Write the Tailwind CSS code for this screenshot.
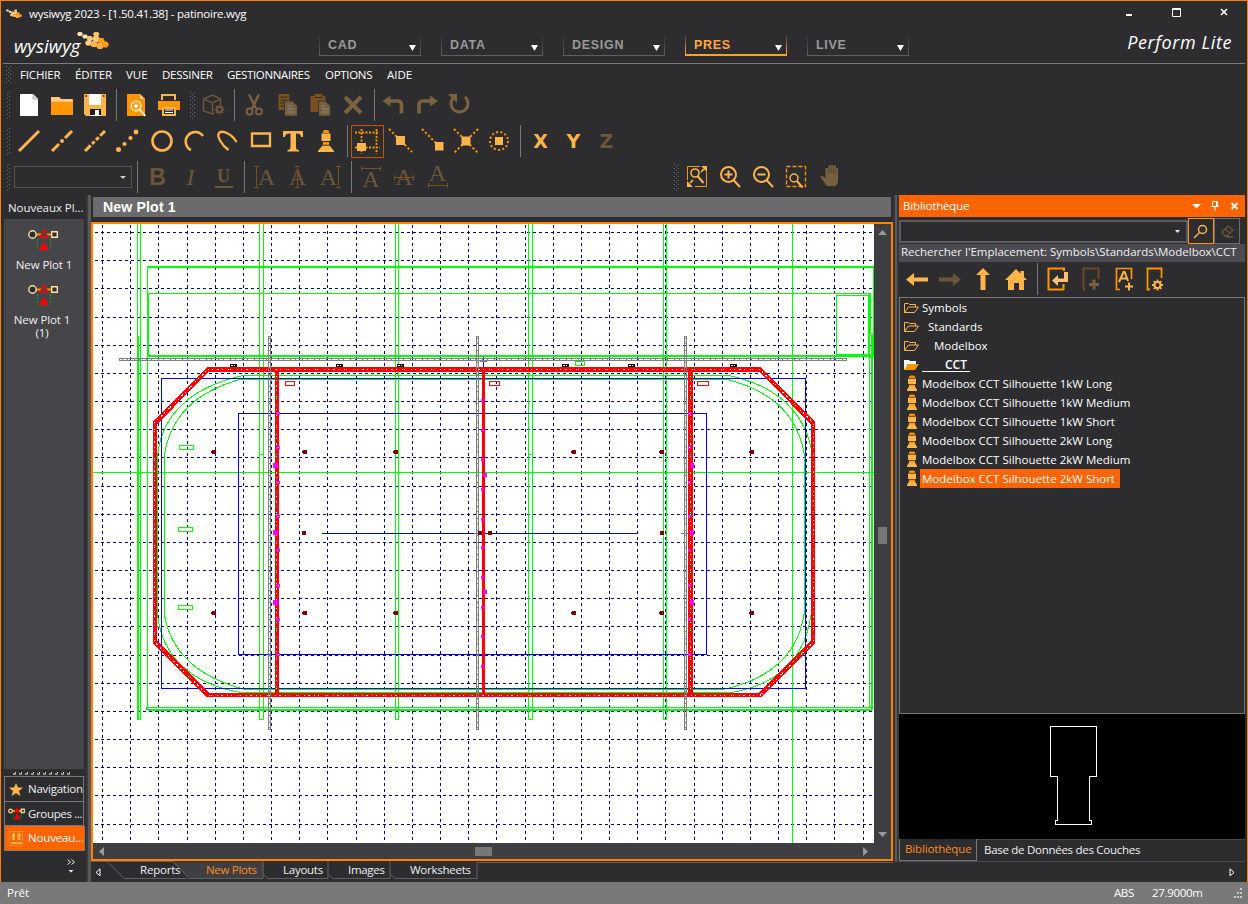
<!DOCTYPE html>
<html lang="fr">
<head>
<meta charset="utf-8">
<title>wysiwyg 2023 - patinoire.wyg</title>
<script src="https://cdn.jsdelivr.net/npm/@tailwindcss/browser@4"></script>
</head>
<body class="w-[1248px] h-[904px] overflow-hidden bg-[#2d2d30] text-[#f0f0f0] font-['Open_Sans','Noto_Sans',sans-serif] text-[11.5px] leading-[16px] whitespace-nowrap cursor-default">
<svg width="0" height="0" class="absolute">
  <defs>
    <pattern id="grip" width="4" height="4" patternUnits="userSpaceOnUse"><rect width="1" height="1" fill="#6e6e72"/><rect x="2" y="2" width="1" height="1" fill="#6e6e72"/></pattern>
    <pattern id="hgrip" width="4" height="4" patternUnits="userSpaceOnUse"><rect width="1" height="1" fill="#ff8a2a"/><rect x="2" y="2" width="1" height="1" fill="#ff8a2a"/></pattern>
    <symbol id="lamp" viewBox="0 0 24 24"><path d="M9 2.500c0-2 6-2 6 0V4H9z M9 13h6v3H9z" fill="#ff9500"/><path d="M7.500 4.500h9V12h-9z M8.500 16.500h7L20 22v1H4v-1z" fill="#ffb44c"/><path d="M9 12.500h6M9 16.200h6" stroke="#3a2a10" stroke-width=".7"/></symbol>
    <symbol id="lamp2" viewBox="0 0 12 17"><path d="M3 1.500C3 0 9 0 9 1.500V3H3z M3 9.500h6V12H3z" fill="#ff9500"/><path d="M2 3.500h8V9H2z M3 11.500h6l2 3.500v1H1v-1z" fill="#ffb44c"/><path d="M3 3.300h6M3 9.500h6" stroke="#7a4a00" stroke-width=".8"/></symbol>
    <symbol id="fold" viewBox="0 0 16 12"><path d="M.5 10.500v-9h4l1 1h6v2.500M.5 10.500l4-5.500h10l-4 5.500z" fill="none" stroke="#ffb44c"/></symbol>
    <symbol id="plot" viewBox="0 0 30 24"><path d="M8 6.500h16" stroke="#ff9500" stroke-width="2"/><circle cx="4.500" cy="6.500" r="3.700" fill="#2d2d30" stroke="#ffe0a8" stroke-width="1.400"/><path d="M23.700 3.700h5.600v5.600h-5.600z" fill="#2d2d30" stroke="#ffe0a8" stroke-width="1.400"/><path d="M12 9l4-7 4 7z" fill="#46454a" stroke="#f00" stroke-width="1.400"/><path d="M11 22l5-8 5 8z" fill="#f00"/><path d="M9.500 11v11M22.500 11v11" stroke="#0a0" stroke-dasharray="2 1.500"/></symbol>
    <symbol id="miniplot" viewBox="0 0 17 14"><path d="M4 4h9" stroke="#ff9500" stroke-width="2"/><circle cx="2.500" cy="4" r="1.800" fill="none" stroke="#ffd9a0" stroke-width="1.200"/><path d="M13.300 2.200h3v3.500h-3z" fill="none" stroke="#ffd9a0" stroke-width="1.200"/><path d="M6 5.500l3-5 3 5z M6 12.500l3-7 3 7z" fill="#e00"/><path d="M5 6v6M13 6v6" stroke="#0a0" stroke-dasharray="1.500 1"/></symbol>
    <symbol id="splash" viewBox="0 0 32 18"><path d="M0 2l1.500-2h3L6 2 4.500 4h-3z M5 4.500l1.500-2h3l1.500 2-1.500 2h-3z" fill="#ffe2b5"/><path d="M16 2l1.500-2h3.500l1.500 2-1.500 3h-3.500z" fill="#ffbf66"/><path d="M9.500 6.500L11 4h3.500l1.500 2.500L14.500 9H11z M15 6.500L17 4h4l2 2.500L21 10h-4z" fill="#ffc873"/><path d="M20.500 9l1.700-3h4l1.600 3-1.600 3h-4z" fill="#ff9f1f"/><path d="M8 11l1.500-2.500h4L15 11l-1.500 2.500h-4z" fill="#ffd28c"/><path d="M13 12l2-3h4l2 3-2 3h-4z" fill="#ffb347"/><path d="M19 14l2-3h4l2 3-2 3h-4z" fill="#ffae3d"/><path d="M25 12.500l1.500-3h3.500l2 3-2 3h-3.500z" fill="#ff9a1a"/></symbol>
  </defs>
</svg>
<div class="flex flex-col h-[882px] border-x border-t border-[#ff8200] w-[1248px]">
  <!-- title bar -->
  <div class="flex items-center h-[26px] shrink-0 pl-[5px] pr-[18px]">
    <svg width="16" height="10"><use href="#splash"/></svg>
    <span class="ml-[7px] text-white tracking-[-0.24px]">wysiwyg 2023 - [1.50.41.38] - patinoire.wyg</span>
    <svg class="ml-auto mb-[6px]" width="104" height="12" fill="none" stroke="#fff"><path d="M1 10h6" stroke-width="2"/><path d="M47.500 3.500h8v8h-8zM47 4.500h9"/><path d="M96 4l6 6m0-6l-6 6" stroke-width="1.600"/></svg>
  </div>
  <!-- logo and mode selector -->
  <div class="flex h-[36px] shrink-0 mx-[2px]">
    <div class="w-[316px] flex items-start pl-[11px]">
      <span class="mt-[8px] w-[67px] text-[18.500px] italic text-white tracking-[.1px] leading-[22px]">wysiwyg</span>
      <svg class="-ml-[4px] mt-[5px]" width="32" height="18"><use href="#splash"/></svg>
    </div>
    <div class="flex gap-[20px] pt-[8px] font-['Liberation_Sans',sans-serif] font-bold text-[12.5px] tracking-[.7px] text-[#9a9a9a]">
      <div class="w-[102px] h-[21px] border-x border-b [border-image:linear-gradient(transparent,#606062)_1] flex items-center justify-between pl-[8px] pr-[4px]"><span>CAD</span><svg class="mt-[5px]" width="7" height="6"><path d="M0 0h7L3.500 6z" fill="#fff"/></svg></div>
      <div class="w-[102px] h-[21px] border-x border-b [border-image:linear-gradient(transparent,#606062)_1] flex items-center justify-between pl-[8px] pr-[4px]"><span>DATA</span><svg class="mt-[5px]" width="7" height="6"><path d="M0 0h7L3.500 6z" fill="#fff"/></svg></div>
      <div class="w-[102px] h-[21px] border-x border-b [border-image:linear-gradient(transparent,#606062)_1] flex items-center justify-between pl-[8px] pr-[4px]"><span>DESIGN</span><svg class="mt-[5px]" width="7" height="6"><path d="M0 0h7L3.500 6z" fill="#fff"/></svg></div>
      <div class="w-[102px] h-[21px] border-x border-b-2 [border-image:linear-gradient(transparent,#ffa02d_80%)_2_1] flex items-center justify-between pl-[8px] pr-[4px] text-[#ffa63c]"><span>PRES</span><svg class="mt-[6px]" width="7" height="6"><path d="M0 0h7L3.500 6z" fill="#fff"/></svg></div>
      <div class="w-[102px] h-[21px] border-x border-b [border-image:linear-gradient(transparent,#606062)_1] flex items-center justify-between pl-[8px] pr-[4px]"><span>LIVE</span><svg class="mt-[5px]" width="7" height="6"><path d="M0 0h7L3.500 6z" fill="#fff"/></svg></div>
    </div>
    <span class="ml-auto mr-[13px] mt-[3px] text-[18px] tracking-[.6px] leading-[24px] italic text-white">Perform Lite</span>
  </div>
  <div class="h-px shrink-0 mx-[2px] bg-[#7b7b7d]"></div>
  <!-- menu -->
  <div class="flex items-center h-[23px] shrink-0 pl-[5px] pb-[2px] text-white tracking-[-0.05px]">
    <svg width="5" height="18"><rect width="5" height="18" fill="url(#grip)"/></svg>
    <span class="ml-[9px] w-[55px] tracking-[-0.15px]">FICHIER</span><span class="w-[51px] tracking-[-0.15px]">ÉDITER</span><span class="w-[36px]">VUE</span><span class="w-[65px] tracking-[-0.25px]">DESSINER</span><span class="w-[98px] tracking-[-0.35px]">GESTIONNAIRES</span><span class="w-[62px] tracking-[-0.3px]">OPTIONS</span><span>AIDE</span>
  </div>
  <!-- toolbar: file and edit -->
  <div class="flex items-center h-[36px] shrink-0 [&>svg]:shrink-0">
    <svg width="12" height="34"><rect x="5" y="3" width="5" height="29" fill="url(#grip)"/></svg>
    <svg width="33" height="24" viewBox="-4 0 33 24"><path d="M3 1h13l5 5v17H3z" fill="#fff"/><path d="M16 1v5h5" fill="#ddd" stroke="#999" stroke-width=".7"/></svg>
    <svg width="33" height="24" viewBox="-4 0 33 24"><path d="M1 4h8l2 2h12v16H1z" fill="#ff9500"/><path d="M1 4h8l2 2h11v1.500H1z" fill="#ffc878"/><path d="M1 8h22" stroke="#fff" stroke-width=".8"/></svg>
    <svg width="33" height="24" viewBox="-4 0 33 24"><path d="M1 1h22v22H3l-2-2z" fill="#ffb44c"/><path d="M6 1h12v11H6z" fill="#fff"/><path d="M7 16h11v7H7z" fill="#1d1d1f"/><path d="M12 17h4v6h-4z M7 22h11v1H7z" fill="#fff"/><path d="M20 2h1.500v2H20z M2.500 2H4v2H2.500z" fill="#5a3500"/></svg>
    <svg width="8" height="34"><path d="M4.500 1v32" stroke="#77777a"/></svg>
    <svg width="33" height="24" viewBox="-4 0 33 24"><path d="M3 1h13l5 5v17H3z" fill="#ff9500"/><path d="M16 1v5h5" fill="#ffc878"/><circle cx="12" cy="13" r="4.800" fill="none" stroke="#ffe9cc" stroke-width="1.500"/><path d="M15.500 16.500l6 6.500M9.500 13h5M12 10.500v5" stroke="#fff" stroke-width="1.600"/></svg>
    <svg width="33" height="24" viewBox="-4 0 33 24"><path d="M1 8h22v9h-4v-3H5v3H1z" fill="#ff9500"/><path d="M5 7V2h13v5M6 15h12v7H6z" fill="none" stroke="#ffb44c" stroke-width="2"/><path d="M8 17h8M8 19.500h8" stroke="#fff"/></svg>
    <svg width="11" height="34"><rect x="4" y="3" width="5" height="29" fill="url(#grip)"/></svg>
    <svg width="33" height="24" viewBox="-4.500 0 33 24" fill="none" stroke="#6b563a" stroke-width="1.500"><path d="M2 6l9-4 8 4v6M2 6v12l9 3 2-1M2 6l9 4 8-4M11 10v11"/><circle cx="18" cy="16.500" r="2.800" stroke-width="2"/><path d="M18 11.500v10M13 16.500h10M14.500 13l7 7M21.500 13l-7 7" stroke-dasharray="2 6" /></svg>
    <svg width="8" height="34"><path d="M4.500 1v32" stroke="#77777a"/></svg>
    <svg width="33" height="24" viewBox="-4 0 33 24" fill="none" stroke="#7a6140"><path d="M7 1.500l7 14M17 1.500l-7 14" stroke-width="2.500"/><circle cx="7.500" cy="18.500" r="3" stroke-width="2"/><circle cx="17" cy="18.500" r="3" stroke-width="2"/></svg>
    <svg width="33" height="24" viewBox="-5.500 0 33 24"><path d="M2 1h11v16H2z" fill="#7a501c"/><path d="M4 4h7M4 7h6M4 10h4M4 13h4" stroke="#2d2d30"/><path d="M8 8h8l5 5v10H8z" fill="#76603f" stroke="#2d2d30" stroke-width=".8"/><path d="M11 13h4M11 16h7M11 19h7" stroke="#8b8b8b"/></svg>
    <svg width="33" height="24" viewBox="-5.500 0 33 24"><path d="M1 3h4V1h8v2h3v16H1z" fill="#7a501c"/><path d="M5 4.500h8" stroke="#2d2d30"/><path d="M9 8h7l5 5v10H9z" fill="#76603f" stroke="#2d2d30" stroke-width=".8"/><path d="M12 13h3M12 16h7M12 19h7" stroke="#8b8b8b"/></svg>
    <svg width="33" height="24" viewBox="-4 0 33 24"><path d="M4 4l16 16M20 4L4 20" stroke="#7a6140" stroke-width="4"/></svg>
    <svg width="9" height="34"><path d="M4.500 1v32" stroke="#77777a"/></svg>
    <svg width="33" height="24" viewBox="-2.500 0 33 24"><path d="M8 8h8q4 0 4 4v8.500" fill="none" stroke="#7a6140" stroke-width="3.600"/><path d="M1 8l8-5.500v11z" fill="#7a6140"/></svg>
    <svg width="33" height="24" viewBox="-4 0 33 24"><path d="M15 8H7q-4 0-4 4v8.500" fill="none" stroke="#7a6140" stroke-width="3.600"/><path d="M22 8l-8-5.500v11z" fill="#7a6140"/></svg>
    <svg width="33" height="24" viewBox="-2 0 33 24"><path d="M6 5a8.500 8.500 0 1 0 12-1" fill="none" stroke="#7a6140" stroke-width="3"/><path d="M1 1h9v9z" fill="#7a6140"/></svg>
  </div>
  <!-- toolbar: drawing -->
  <div class="flex items-center h-[36px] shrink-0 [&>svg]:shrink-0">
    <svg width="12" height="34"><rect x="5" y="3" width="5" height="29" fill="url(#grip)"/></svg>
    <svg width="33" height="24" viewBox="-4 0 33 24"><path d="M2 22L22 2" stroke="#ffb44c" stroke-width="3"/></svg>
    <svg width="33" height="24" viewBox="-4 0 33 24" stroke="#ffb44c" stroke-width="3"><path d="M2 22l7-7M15 9l7-7"/><circle cx="12" cy="12" r="2" fill="#ffb44c" stroke="none"/></svg>
    <svg width="33" height="24" viewBox="-4 0 33 24"><path d="M2 22L22 2" stroke="#ffb44c" stroke-width="3" stroke-dasharray="8 2 3.500 2 4 2"/></svg>
    <svg width="33" height="24" viewBox="-4 0 33 24" fill="#ffb44c"><circle cx="2.500" cy="20.500" r="2.500"/><circle cx="8.500" cy="15" r="2.100"/><circle cx="14.500" cy="9" r="2.100"/><circle cx="20" cy="3" r="2.400"/></svg>
    <svg width="33" height="24" viewBox="-4.500 0 33 24"><circle cx="12.500" cy="12" r="9.500" fill="none" stroke="#ffb44c" stroke-width="2.600"/></svg>
    <svg width="33" height="24" viewBox="-4 0 33 24"><path d="M21 7A9.500 9.500 0 1 0 9 21" fill="none" stroke="#ffb44c" stroke-width="2.600"/></svg>
    <svg width="33" height="24" viewBox="-4.500 0 33 24"><path d="M13 21C6 16 1 7 3.500 4S16 4 21 13" fill="none" stroke="#ffb44c" stroke-width="2.300"/></svg>
    <svg width="33" height="24" viewBox="-5 0 33 24"><path d="M3 4.500h18v12.500H3z" fill="none" stroke="#ffb44c" stroke-width="2.300"/></svg>
    <svg width="33" height="24" viewBox="-3 0 33 24"><path d="M3 2h20v6h-2c-.5-3-2-3.500-5-3.500V18c0 2 .5 3 3 3v1.500H7.500V21c2 0 3-1 3-3V4.500C7 4.500 5.500 5 5 8H3z" fill="#ffb44c"/></svg>
    <svg width="33" height="24" viewBox="-4 0 33 24"><use href="#lamp" width="24" height="24"/></svg>
    <svg width="8" height="34"><path d="M4.500 1v32" stroke="#77777a"/></svg>
    <svg width="33" height="33" viewBox="0 0 33 33" fill="none"><path d="M.5.500h32v32H.5z" stroke="#c8540a"/><path d="M10.500 4v25M25.500 4v25M4 7.500h24M4 22.500h25" stroke="#ff9500" stroke-width="1.800" stroke-dasharray="2 1.500"/><path d="M6 18h9v8H6z" fill="#ffb44c"/></svg>
    <svg width="33" height="26" viewBox="-4 0 33 26"><path d="M1 1l23 23" stroke="#ff9500" stroke-width="2" stroke-dasharray="2.200 2.200"/><path d="M8 8h9v9H8z" fill="#ffb44c"/></svg>
    <svg width="33" height="26" viewBox="-4 0 33 26"><path d="M1 1l19 19" stroke="#ff9500" stroke-width="2" stroke-dasharray="2.200 2.200"/><path d="M14 14h8.500v8.500H14z" fill="#ffb44c"/></svg>
    <svg width="33" height="26" viewBox="-3 0 33 26"><path d="M1 1l24 24M25 1L1 25" stroke="#ff9500" stroke-width="2" stroke-dasharray="2.200 2.200"/><path d="M8.500 8.500h9v9h-9z" fill="#ffb44c"/></svg>
    <svg width="33" height="26" viewBox="-3.500 0 33 26"><circle cx="12.500" cy="13" r="9" fill="none" stroke="#ff9500" stroke-width="2" stroke-dasharray="2 2.350"/><path d="M8.500 9h8v8h-8z" fill="#ffb44c"/></svg>
    <svg width="8" height="34"><path d="M4.500 1v32" stroke="#77777a"/></svg>
    <span class="w-[33px] text-center font-['DejaVu_Sans'] font-bold text-[19px] text-[#ffb44c]">X</span>
    <span class="w-[33px] text-center font-['DejaVu_Sans'] font-bold text-[19px] text-[#ffb44c]">Y</span>
    <span class="w-[33px] text-center font-['DejaVu_Sans'] font-bold text-[19px] text-[#6b563a]">Z</span>
  </div>
  <!-- toolbar: text format and zoom -->
  <div class="flex items-center h-[36px] shrink-0 text-[#6b563a] [&>svg]:shrink-0">
    <svg width="12" height="34"><rect x="5" y="3" width="5" height="29" fill="url(#grip)"/></svg>
    <div class="ml-[1px] w-[118px] h-[22px] border border-[#535355] flex items-center justify-end pr-[5px]"><svg width="6" height="3"><path d="M0 0h6L3 3z" fill="#ccc"/></svg></div>
    <svg width="9" height="34"><path d="M5.500 1v32" stroke="#77777a"/></svg>
    <span class="w-[33px] text-center font-['Liberation_Sans'] font-bold text-[23px]">B</span>
    <span class="w-[33px] text-center font-['Liberation_Serif'] italic text-[24px]">I</span>
    <span class="w-[33px] flex flex-col items-center font-['Liberation_Serif'] font-bold text-[18px]"><span class="mt-[2px]">U</span><span class="h-[2px] mt-[2px] w-[18px] bg-[#6b563a]"></span></span>
    <svg width="8" height="34"><path d="M4.500 1v32" stroke="#77777a"/></svg>
    <span class="w-[33px] flex items-center justify-center font-['Liberation_Serif'] text-[24px]"><svg width="5" height="22" class="-mr-px"><path d="M0 .5h5M2.500 0v22M0 21.500h5" stroke="#7a501c" fill="none"/></svg>A</span>
    <span class="w-[33px] flex items-center justify-center font-['Liberation_Serif'] text-[24px] relative">A<svg width="7" height="22" class="absolute left-[13px]"><path d="M1 .5h5M3.500 0v22M1 21.500h5" stroke="#7a501c" fill="none"/></svg></span>
    <span class="w-[33px] flex items-center justify-center font-['Liberation_Serif'] text-[24px]">A<svg width="5" height="22" class="-ml-px"><path d="M0 .5h5M2.500 0v22M0 21.500h5" stroke="#7a501c" fill="none"/></svg></span>
    <svg width="8" height="34"><path d="M4.500 1v32" stroke="#77777a"/></svg>
    <span class="w-[32px] flex flex-col items-center font-['Liberation_Serif'] text-[24px]"><svg width="20" height="5" class="-mt-[2px]"><path d="M0 2.500h20M.5 0v5M19.500 0v5" stroke="#7a501c"/></svg>A</span>
    <span class="w-[34px] flex items-center justify-center font-['Liberation_Serif'] text-[24px] relative">A<svg width="20" height="5" class="absolute top-[6px] left-[7px]"><path d="M0 2.500h20M.5 0v5M19.500 0v5" stroke="#7a501c"/></svg></span>
    <span class="w-[33px] flex flex-col items-center font-['Liberation_Serif'] text-[24px] -mt-[2px]">A<svg width="20" height="5" class="mt-[2px]"><path d="M0 2.500h20M.5 0v5M19.500 0v5" stroke="#7a501c"/></svg></span>
    <svg width="228" height="34"><rect x="220" y="3" width="5" height="29" fill="url(#grip)"/></svg>
    <svg width="33" height="24" viewBox="-4 0 33 24" fill="none" stroke="#ffb44c"><path d="M14 1.500H1.500V15M9 21.500h11.500V7" stroke="#ff9500"/><circle cx="9" cy="8" r="4" stroke-width="1.600"/><path d="M11.500 11l6 7" stroke-width="2"/><path d="M15 1h6v6zM1 16v6h6z" fill="#ffb44c" stroke="none"/><path d="M15 7l3-3M4 18l3-3" stroke-width="1.700"/></svg>
    <svg width="33" height="24" viewBox="-4 0 33 24" fill="none" stroke="#ffb44c" stroke-width="2"><circle cx="9.500" cy="9.500" r="7.500"/><path d="M14.500 15l6.500 7"/><path d="M5.500 9.500h8M9.500 5.500v8"/></svg>
    <svg width="33" height="24" viewBox="-4 0 33 24" fill="none" stroke="#ffb44c" stroke-width="2"><circle cx="9.500" cy="9.500" r="7.500"/><path d="M14.500 15l6.500 7"/><path d="M5.500 9.500h8"/></svg>
    <svg width="33" height="24" viewBox="-4 0 33 24" fill="none" stroke="#ffb44c"><path d="M1.500 1.500h19v20h-19z" stroke="#ff9500" stroke-width="1.300" stroke-dasharray="4 2"/><circle cx="9" cy="13" r="4" stroke-width="1.500"/><path d="M12 16l5.500 6.500" stroke-width="2"/></svg>
    <svg width="33" height="24" viewBox="-6 1 33 24"><path d="M7 22l-6-8c-1-2 1-3 3-1l1.500 1.500V4h2.800V1.500h2.700V.5h2.500v1h2.500V4H18v12q0 6-4 6z" fill="#76603f"/><path d="M8.300 3v7M11 2v8M13.500 2v8M15.800 4v6" stroke="#4d4130" stroke-width=".8"/></svg>
  </div>
  <!-- workspace -->
  <div class="flex flex-1 min-h-0 -mt-px pt-px">
    <!-- left shortcuts -->
    <div class="w-[85px] shrink-0 flex flex-col pl-[3px]">
      <div class="h-[24px] shrink-0 pl-[4px] pt-[5px] tracking-[-0.05px]">Nouveaux Pl...</div>
      <div class="w-[80px] h-[550px] shrink-0 bg-[#46454a] text-center flex flex-col items-center pt-[9px]">
        <svg class="mr-[2px]" width="30" height="24"><use href="#plot"/></svg>
        <span class="mt-[5px] tracking-[-0.1px]">New Plot 1</span>
        <svg class="mt-[10px] mr-[2px]" width="30" height="24"><use href="#plot"/></svg>
        <span class="mt-[6px] mr-[4px] leading-[13px] tracking-[-0.1px]">New Plot 1<br>(1)</span>
      </div>
      <div class="h-[7px] shrink-0 flex items-center justify-center mr-[4px] bg-[#2d2d30]">
        <svg width="60" height="4"><path d="M0 3h60" stroke="#bbb" stroke-width="1.500" stroke-dasharray="3 3"/><path d="M2 1.500h60" stroke="#fff" stroke-dasharray="1 5"/></svg>
      </div>
      <div class="w-[80px] h-[26px] shrink-0 border border-[#77777a] flex items-center pl-[4px] gap-[5px] overflow-hidden"><svg class="shrink-0" width="14" height="13"><path d="M7 0l2 4.500 5 .3-4 3.200 1.500 5L7 10.200 2.500 13 4 8 0 4.800l5-.3z" fill="#ffb44c"/></svg><span class="tracking-[-0.25px]">Navigation</span></div>
      <div class="w-[80px] h-[24px] shrink-0 border-x border-b border-[#77777a] flex items-center pl-[3px] gap-[3px] overflow-hidden"><svg class="shrink-0" width="17" height="14"><use href="#miniplot"/></svg><span class="tracking-[-0.35px]">Groupes ...</span></div>
      <div class="w-[81px] h-[25px] shrink-0 border border-[#8a7a6a] border-t-0 bg-[#ff6400] flex items-center pl-[4px] gap-[5px] text-white overflow-hidden"><svg class="shrink-0" width="14" height="15"><path d="M.5.500h13v14H.5z" fill="none" stroke="#ffb44c" stroke-dasharray="1 1"/><path d="M3 2h3v7H3zM8.500 2h3v7h-3z M2 11h5v2H2zM7.500 11h5v2h-5z" fill="#ffb44c"/></svg><span class="tracking-[-0.15px]">Nouveau...</span></div>
      <svg class="mt-[7px] ml-[63px]" width="10" height="16" fill="none" stroke="#eee"><path d="M.5 1.500l3 2.500-3 2.500M4.500 1.500l3 2.500-3 2.500"/><path d="M1.500 12h5L4 14.500z" fill="#eee" stroke="none"/></svg>
    </div>
    <div class="w-[5px] shrink-0 bg-[#59595c] border-l-2 border-[#3a3a3d]"></div>
    <!-- plot view -->
    <div class="w-[802px] shrink-0 flex flex-col">
      <div class="h-[20px] mt-[2px] ml-[2px] mr-[2px] shrink-0 bg-[#6b6a6c] pl-[10px] leading-[20px] font-['Liberation_Sans',sans-serif] font-bold text-[14.200px] tracking-[.1px] text-white">New Plot 1</div>
      <div class="mt-[5px] h-[639px] shrink-0 border-2 border-[#ff8200] bg-[#3f3e43] flex flex-col">
        <div class="flex h-[619px]">
          <svg id="plan" class="shrink-0 bg-white" width="781" height="619" viewBox="93 224 781 619" fill="none" shape-rendering="crispEdges">
            <g id="grid" stroke="#000080" stroke-dasharray="3 3"></g>
            <!-- arena axes -->
            <g stroke="#0f0">
              <path d="M93 472.500h781M792.500 224v619M137.500 224v495h3V224M138.500 336v383M259.500 224v495h4V224M259.500 454.500h4M137 454.500h4M395.500 224v495h3V224M528.500 224v495h4V224M528.500 454.500h4M663.500 224v495h3V224"/>
              <path d="M147 267h727M147 356h727M148 710h724" stroke-width="2"/>
              <path d="M147.500 266v444M148.500 293v62M148 293.500h722.500V334M873.500 266v90M836.500 295.500h32v59h-32zM836 354h33M146.500 707.500H872M869.500 293v414M146.500 707v3"/>
              <path d="M871.500 334v376" stroke-width="2"/>
              <path d="M243 375.500h486M240 379.500h490M240 692.500h492M245 689.500h480M157.500 455v160M164.500 455v160M804.500 455v160M157.500 455Q165 393 243 375.500M164.500 455Q173 398 240 379.500M157.500 615Q165 678 240 692.500M164.500 615Q174 671 245 689.500M729 375.500Q800 391 811.500 450M729 380Q795 397 804.500 455M804.500 612Q796 673 725 689M811 615Q802 680 732 692.500"/>
              <path d="M179.500 445.500h14v4h-14zM178.500 527.500h14v4h-14zM178.500 605.500h14v4h-14zM575.500 361.500h9v4h-9z"/>
            </g>
            <path d="M161.500 378.500h644v310h-644zM238.500 413.500h468v241h-468zM322 533.500h315M483.500 357v12" stroke="#00f"/>
            <!-- boards -->
            <g stroke="#f00">
              <path d="M208 369.500h552L813 423v219l-53 53H208l-53-53V423z" stroke-width="4.500"/>
              <path d="M277 370v325" stroke-width="4"/><path d="M483.500 370v325" stroke-width="3"/><path d="M690.500 370v325" stroke-width="5"/>
              <path d="M285.500 381.500h9v4h-9zM489.500 381.500h10v4h-10zM697.500 381.500h11v4h-11z"/>
            </g>
            <path d="M208 369.500h552L813.500 423v219l-53.500 53.500H208L154.500 642V423zM276.500 376v316M690.500 376v316" stroke="#fff" stroke-dasharray="1 3 1 4 2 3 1 5 1 1 1 6"/>
            <!-- trusses -->
            <path d="M119.500 358.500h727v2h-727zM268.500 336.500h2v393h-2zM476.500 336.500h2v393h-2zM684.500 336.500h2v393h-2z" stroke="#808080"/>
            <path d="M122 359.500h722M269.500 338v390M477.500 338v390M685.500 338v390" stroke="#808080" stroke-dasharray="1 4 1 6"/>
            <path d="M681 533.500h7M474 533.500h7M480 361.500h7" stroke="#808080"/>
            <g id="marks"></g>
          </svg>
          <div class="flex-1 flex flex-col items-center justify-between py-[6px]">
            <svg width="9" height="5"><path d="M0 5h9L4.500 0z" fill="#999"/></svg>
            <div class="w-[9px] h-[17px] mt-[3px] bg-[#777]"></div>
            <svg width="9" height="5"><path d="M0 0h9L4.500 5z" fill="#999"/></svg>
          </div>
        </div>
        <div class="flex-1 w-[781px] flex items-center justify-between px-[6px]">
          <svg width="5" height="9"><path d="M5 0v9L0 4.500z" fill="#999"/></svg>
          <div class="w-[17px] h-[9px] bg-[#777]"></div>
          <svg width="5" height="9"><path d="M0 0v9l5-4.500z" fill="#999"/></svg>
        </div>
      </div>
      <!-- sheet tabs -->
      <div class="relative flex-1 flex items-center">
        <svg class="absolute inset-0" width="802" height="21" fill="none" stroke="#606064"><path d="M82 .5h91v17h-75z" fill="#3f3e43" stroke="none"/><path d="M0 .5h16l17 17h63M82 .5l16 17h74V0M173 14l4 3.500h60V0M238 14l4 3.500h57V0M300 14l4 3.500h82V1.500h416M16 .5h66"/></svg>
        <svg class="relative ml-[4px] mt-px" width="6" height="9"><path d="M5 .8v7L1 4.500z" fill="none" stroke="#fff"/></svg>
        <span class="relative ml-[39px] mb-[3px] w-[66px] tracking-[-0.2px]">Reports</span><span class="relative mb-[3px] w-[77px] text-[#ff8c1a] tracking-[-0.3px]">New Plots</span><span class="relative mb-[3px] w-[65px] tracking-[-0.25px]">Layouts</span><span class="relative mb-[3px] w-[62px] tracking-[-0.3px]">Images</span><span class="relative mb-[3px] tracking-[-0.25px]">Worksheets</span>
      </div>
    </div>
    <div class="w-[6px] shrink-0 mb-[20px] bg-[#59595c] border-x-2 border-[#38383b]"></div>
    <!-- library -->
    <div class="flex-1 min-w-0 flex flex-col pr-[2px]">
      <div class="h-[22px] shrink-0 bg-[#ff6400] flex items-center text-white pl-[4px] pr-[5px]">
        <span class="w-[72px] tracking-[-0.15px]">Bibliothèque</span>
        <svg width="210" height="5"><rect width="210" height="5" fill="url(#hgrip)"/></svg>
        <svg class="ml-auto" width="48" height="12" fill="none" stroke="#fff"><path d="M0 4h9L4.500 8.500z" fill="#fff" stroke="none"/><path d="M20.500 1.500h5v5h-5zM24.500 1v6M19 6.500h8M23 7v4"/><path d="M39.500 3l6 6m0-6l-6 6" stroke-width="1.800"/></svg>
      </div>
      <div class="flex h-[27px] shrink-0 pt-[1px] items-start">
        <div class="mt-[2px] w-[289px] h-[23px] border-2 border-[#5b5b5d] flex items-center justify-end pr-[6px]"><svg width="5" height="3"><path d="M0 0h5L2.500 3z" fill="#eee"/></svg></div>
        <div class="w-[26px] h-[26px] border border-[#ff9500] flex items-center justify-center pr-px"><svg width="15" height="15" fill="none" stroke="#ffb44c" stroke-width="1.500"><circle cx="9.500" cy="5.500" r="4"/><path d="M6.500 8.500L1 14"/></svg></div>
        <div class="w-[26px] h-[26px] border border-[#6b6b6d] flex items-center justify-center"><svg width="13" height="13" fill="none" stroke="#6b563a" stroke-width="1.300"><path d="M1 7l6-6 5 4-6 6H4zM4 4l5 4M6 12h6"/></svg></div>
      </div>
      <div class="h-[18px] shrink-0 bg-[#4c4b51] pl-[2px] leading-[16px] overflow-hidden">Rechercher l'Emplacement: Symbols\Standards\Modelbox\CCT</div>
      <div class="flex items-center h-[35px] shrink-0 pl-[2px] pb-[2px] [&>svg]:shrink-0">
        <svg width="33" height="24" viewBox="-4 0 33 24"><path d="M1 12.500l8-6.500v4.500h14v4H9V19z" fill="#ffb44c"/></svg>
        <svg width="33" height="24" viewBox="-4 0 33 24"><path d="M23 12.500L15 6v4.500H1v4h14V19z" fill="#6b563a"/></svg>
        <svg width="33" height="24" viewBox="-4 0 33 24"><path d="M12 1l7 7h-4.500v15h-5V8H5z" fill="#ffb44c"/></svg>
        <svg width="33" height="24" viewBox="-4 0 33 24"><path d="M12 2l4.500 4.500V4H20v6l3 3h-3v10h-5v-7H10v7H4V13H1z" fill="#ffb44c"/></svg>
        <svg width="8" height="34"><path d="M4.500 1v32" stroke="#77777a"/></svg>
        <svg width="33" height="24" viewBox="-5 0 33 24"><path d="M12 1.500H2.500v21H18M17.500 17v6M12 1.500h6V4" fill="none" stroke="#ff9500" stroke-width="2"/><path d="M6 13.500l6-5.500v3.500h6V5h4v10H12v4z" fill="#ffc070"/></svg>
        <svg width="33" height="24" viewBox="-5 0 33 24"><path d="M6 22.500H4.500v-21h15V12" fill="none" stroke="#6b4a1f" stroke-width="2"/><path d="M10 17.500h10M15 12.500v10" stroke="#76603f" stroke-width="3"/></svg>
        <svg width="33" height="24" viewBox="-5 0 33 24"><path d="M8 22.500H4.500v-21h15V12" fill="none" stroke="#ff9500" stroke-width="1.700"/><path d="M7 15L11.500 5h1.200L16 14M8.500 11.500h6M13 19.500h8M17 15.500v8" fill="none" stroke="#ffb44c" stroke-width="2"/></svg>
        <svg width="33" height="24" viewBox="-5 0 33 24"><path d="M5 22.500H2.500v-21h14V11" fill="none" stroke="#ff9500" stroke-width="1.800"/><circle cx="12.500" cy="18" r="3" fill="none" stroke="#ffb44c" stroke-width="2"/><path d="M12.500 12.500v11M7 18h11M8.700 14.200l7.600 7.600M16.300 14.200l-7.600 7.600" stroke="#ffb44c" stroke-width="1.800" stroke-dasharray="2.500 6"/></svg>
      </div>
      <div class="h-[417px] shrink-0 border border-[#77777a] text-white">
        <div class="h-[19px] flex items-center"><svg class="ml-[4px] mr-[2px]" width="16" height="12"><use href="#fold"/></svg>Symbols</div>
        <div class="h-[19px] flex items-center"><svg class="ml-[4px] mr-[8px]" width="16" height="12"><use href="#fold"/></svg>Standards</div>
        <div class="h-[19px] flex items-center"><svg class="ml-[4px] mr-[14px]" width="16" height="12"><use href="#fold"/></svg>Modelbox</div>
        <div class="h-[19px] flex items-center"><svg class="ml-[4px] mr-[2px]" width="16" height="12"><path d="M0 1h5l1 1h6v3H4L1 11H0z" fill="#fff"/><path d="M0 11l4-6h11l-4 6z" fill="#ff9500"/></svg><span class="w-[48px] pl-[23px] h-[14px] leading-[14px] border-b border-white font-semibold text-[12px]">CCT</span></div>
        <div class="h-[19px] flex items-center"><svg class="ml-[6px] mr-[2px]" width="12" height="17"><use href="#lamp2"/></svg><span class="pl-[2px] h-[19px] leading-[19px] pr-[5px]">Modelbox CCT Silhouette 1kW Long</span></div>
        <div class="h-[19px] flex items-center"><svg class="ml-[6px] mr-[2px]" width="12" height="17"><use href="#lamp2"/></svg><span class="pl-[2px] h-[19px] leading-[19px] pr-[5px]">Modelbox CCT Silhouette 1kW Medium</span></div>
        <div class="h-[19px] flex items-center"><svg class="ml-[6px] mr-[2px]" width="12" height="17"><use href="#lamp2"/></svg><span class="pl-[2px] h-[19px] leading-[19px] pr-[5px]">Modelbox CCT Silhouette 1kW Short</span></div>
        <div class="h-[19px] flex items-center"><svg class="ml-[6px] mr-[2px]" width="12" height="17"><use href="#lamp2"/></svg><span class="pl-[2px] h-[19px] leading-[19px] pr-[5px]">Modelbox CCT Silhouette 2kW Long</span></div>
        <div class="h-[19px] flex items-center"><svg class="ml-[6px] mr-[2px]" width="12" height="17"><use href="#lamp2"/></svg><span class="pl-[2px] h-[19px] leading-[19px] pr-[5px]">Modelbox CCT Silhouette 2kW Medium</span></div>
        <div class="h-[19px] flex items-center"><svg class="ml-[6px] mr-[2px]" width="12" height="17"><use href="#lamp2"/></svg><span class="pl-[2px] h-[19px] leading-[19px] pr-[5px] bg-[#ff6400]">Modelbox CCT Silhouette 2kW Short</span></div>
      </div>
      <svg class="shrink-0 bg-black" width="346" height="125" fill="none" stroke="#fff" shape-rendering="crispEdges"><path d="M151.500 12.500h46v50h-7v44h2v4h-36v-4h2v-44h-7z"/></svg>
      <div class="flex h-[23px] shrink-0 border-b border-[#4a4a4d]">
        <div class="w-[78px] h-[22px] border border-t-0 border-[#77777a] pl-[5px] pt-[2px] text-[#ff8c1a] tracking-[-0.15px]">Bibliothèque</div>
        <div class="flex-1 border-t border-[#4a4a4d] pl-[7px] pt-[2px] tracking-[-0.28px]">Base de Données des Couches</div>
      </div>
      <svg class="ml-auto mr-[10px] mt-[6px]" width="6" height="9"><path d="M1 .8v7l4-3.300z" fill="none" stroke="#fff"/></svg>
    </div>
  </div>
</div>
<!-- status bar -->
<div class="h-[22px] bg-[#797979] flex items-center text-white pl-[7px] pr-[4px]">
  <span>Prêt</span><span class="ml-auto w-[38px] tracking-[-0.4px]">ABS</span><span class="w-[82px] tracking-[-0.3px]">27.9000m</span>
  <svg width="10" height="12" fill="#c8c8c8"><path d="M6 1h2v2H6zM6 5h2v2H6zM6 9h2v2H6zM3 5h2v2H3zM3 9h2v2H3zM0 9h2v2H0z"/></svg>
</div>
<script>
  const step = 28.17;
  let d = '', e = '';
  for (let i = 0; i < 28; i++) d += `M${Math.round(102 + i * step) + .5} 225V843`;
  for (let i = 0; i < 22; i++) e += `M95 ${Math.round(232 + i * step) + .5}H874`;
  document.getElementById('grid').innerHTML = `<path d="${d}"/><path d="${e}"/>`;
  const box = (x, y, w, h, c) => `<rect x="${x}" y="${y}" width="${w}" height="${h}" fill="${c}"/>`;
  let m = '';
  for (const y of [452, 613]) for (const x of [213, 304, 395, 573, 661, 751]) m += box(x - 1, y - 2, 4, 4, '#800000') + box(x - 2, y - 1, 5, 2, '#800000');
  for (const x of [304, 480, 490, 662]) m += box(x - 2, 531, 4, 4, '#800000');
  for (const y of [413, 447, 482, 516, 550, 585, 619, 654]) m += box(276, y - 1, 4, 3, '#f0f') + box(688, y - 1, 3, 3, '#f0f') + box(278, y, 1, 1, '#fff') + box(689, y, 1, 1, '#fff');
  for (const y of [465, 532, 602]) m += box(273, y - 2, 5, 5, '#f0f') + box(690, y - 2, 4, 5, '#f0f');
  for (const y of [400, 430, 459, 489, 519, 547, 577, 607, 636, 666]) m += box(481, y - 1, 3, 3, '#f0f');
  for (const y of [475, 592]) m += box(483, y - 2, 4, 4, '#f0f');
  for (const x of [230, 336, 397, 562, 628, 730]) m += box(x, 364, 7, 3, '#000') + box(x + 1, 365, 2, 1, '#fff') + box(x + 4, 365, 1, 1, '#fff');
  document.getElementById('marks').innerHTML = m;
</script>
</body>
</html>
